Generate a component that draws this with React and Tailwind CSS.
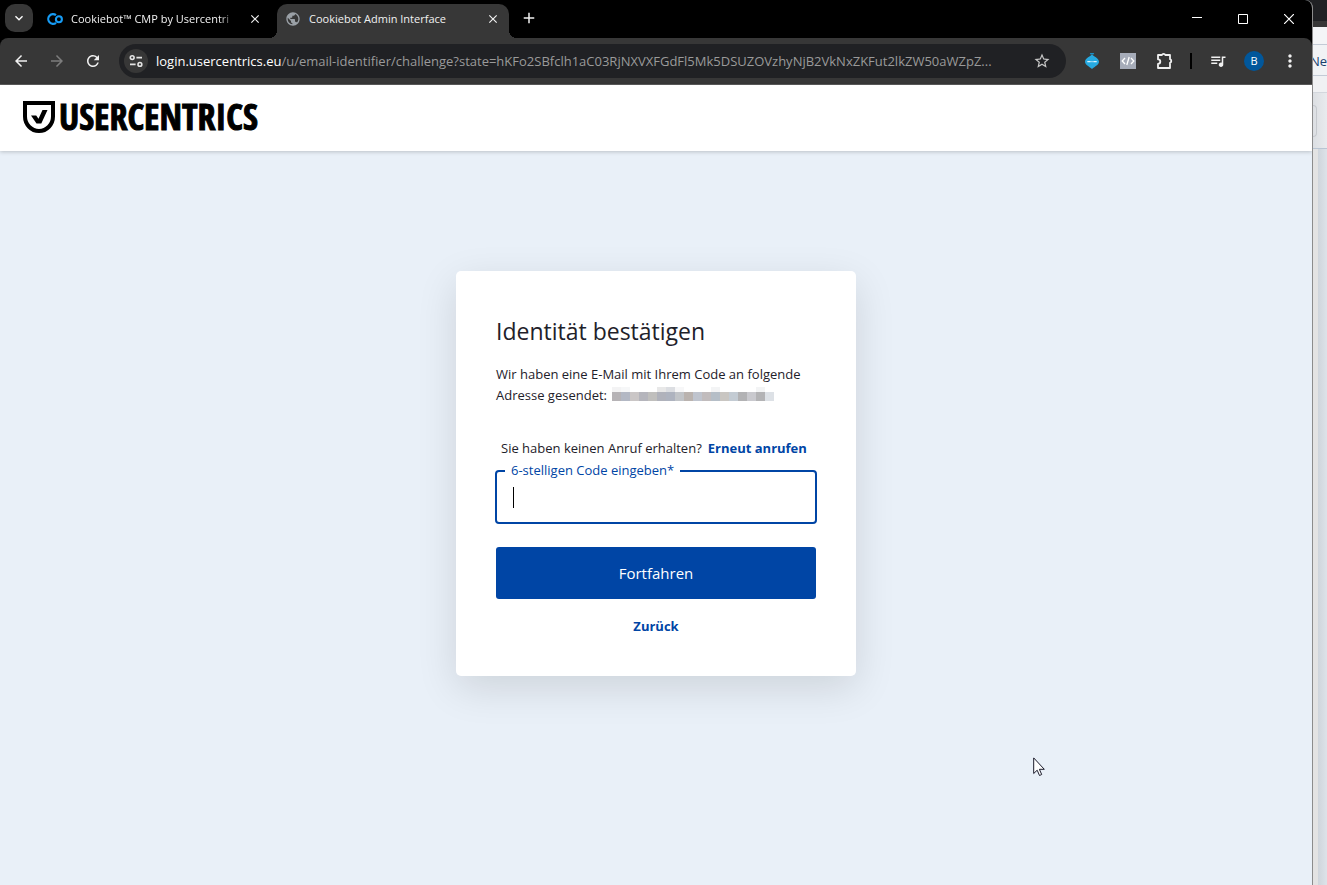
import {
  MdAdd,
  MdArrowBack,
  MdArrowForward,
  MdClose,
  MdKeyboardArrowDown,
  MdMoreVert,
  MdPublic,
  MdQueueMusic,
  MdRefresh,
  MdStarOutline,
} from "react-icons/md";

const CookiebotIcon = () => (
  <svg viewBox="0 0 16 16" className="w-4 h-4 shrink-0" fill="none" stroke="#169bf4">
    <path d="M9 4.2A4.8 4.8 0 1 0 9 11.8" strokeWidth="2.2" />
    <circle cx="11.9" cy="8.3" r="3" strokeWidth="2.1" />
  </svg>
);

const SiteInfoIcon = () => (
  <svg viewBox="0 0 14 14" className="w-3.5 h-3.5" fill="none" stroke="#e3e3e3" strokeWidth="1.6">
    <circle cx="3.2" cy="3.6" r="1.9" />
    <path d="M7.4 3.6H13M1 10.4h5.6" />
    <circle cx="10.9" cy="10.4" r="1.9" />
  </svg>
);

const TimerIcon = () => (
  <svg viewBox="0 0 16 16" className="w-4 h-4">
    <path d="M5.8 0h4.4l-.7 1.6H6.5z" fill="#1c8fc4" />
    <path d="M8 1.5c1 1.4 7 3.5 7 7.2 0 3-4 4.6-7 7.3-3-2.700-7-4.300-7-7.300 0-3.700 6-5.800 7-7.200z" fill="#26a9e0" />
    <path d="M3.3 8.7h9.4" stroke="#d9f2fd" strokeWidth="1.2" strokeDasharray="3.4 .7 1.2 .7" />
  </svg>
);

const CodeIcon = () => (
  <svg viewBox="0 0 16 16" className="w-4 h-4">
    <path d="M0 0h16v16H0z" fill="#a6acb9" />
    <path d="M5 5 2.2 8 5 11M11 5l2.8 3L11 11M9.2 4 6.8 12" fill="none" stroke="#fff" strokeWidth="1.3" />
  </svg>
);

const PuzzleIcon = () => (
  <svg viewBox="0 0 18 18" className="w-[18px] h-[18px]" fill="none" stroke="#f1f1f1" strokeWidth="1.8" strokeLinejoin="round">
    <path d="M3 3h3.900a1.800 1.800 0 0 1 3.400 0H15v4.200a1.900 1.900 0 0 1 0 3.600V16H3v-4.100a2.300 2.300 0 0 0 0-4.600z" />
  </svg>
);

const IconButton = ({ label, className = "", children }) => (
  <button aria-label={label} className={`w-7 h-7 shrink-0 flex items-center justify-center rounded-full ${className}`}>
    {children}
  </button>
);

const Tab = ({ icon, title, active }) => (
  <div
    className={`w-[232px] h-[34px] px-2 pb-1 flex items-center gap-2 rounded-t-[10px] ${
      active ? "bg-[#373737]" : "bg-black"
    }`}
  >
    {icon}
    <span
      className={`flex-1 overflow-hidden whitespace-nowrap text-[11px] leading-4 text-[#f1f1f1] ${
        active ? "" : "[mask-image:linear-gradient(to_right,black_88%,transparent_98%)]"
      }`}
    >
      {title}
    </span>
    <button aria-label="Tab schließen" className="w-4 h-4 flex items-center justify-center text-[#f1f1f1]">
      <MdClose className="w-3.5 h-3.5" stroke="currentColor" />
    </button>
  </div>
);

const TabStrip = () => (
  <div className="h-[38px] bg-black flex items-end">
    <button
      aria-label="Tabs durchsuchen"
      className="w-7 h-7 ml-[5px] mr-1.5 mb-1.5 flex items-center justify-center rounded-[10px] bg-[#373737] text-white"
    >
      <MdKeyboardArrowDown className="w-4 h-4" />
    </button>
    <Tab icon={<CookiebotIcon />} title="Cookiebot™ CMP by Usercentri" />
    <span className="w-2 h-2 -ml-0.5 bg-[radial-gradient(circle_at_0_0,transparent_8px,#373737_8px)]" />
    <Tab icon={<MdPublic className="w-4 h-4 shrink-0 text-[#9aa0a6]" />} title="Cookiebot Admin Interface" active />
    <span className="w-2 h-2 bg-[radial-gradient(circle_at_100%_0,transparent_8px,#373737_8px)]" />
    <button aria-label="Neuer Tab" className="w-6 h-6 mb-2 flex items-center justify-center text-[#f1f1f1]">
      <MdAdd className="w-[18px] h-[18px]" />
    </button>
    <div className="ml-auto self-stretch flex text-white">
      <button aria-label="Minimieren" className="w-[46px] flex items-center justify-center">
        <svg viewBox="0 0 10 10" className="w-2.5 h-2.5" stroke="currentColor">
          <path d="M0 3.5h10" />
        </svg>
      </button>
      <button aria-label="Maximieren" className="w-[46px] flex items-center justify-center">
        <svg viewBox="0 0 10 10" className="w-2.5 h-2.5" fill="none" stroke="currentColor">
          <path d="M.5.5h9v9h-9z" />
        </svg>
      </button>
      <button aria-label="Schließen" className="w-[46px] flex items-center justify-center">
        <svg viewBox="0 0 10 10" className="w-2.5 h-2.5" stroke="currentColor" strokeWidth="1.2">
          <path d="M0 0l10 10M10 0 0 10" />
        </svg>
      </button>
    </div>
  </div>
);

const Toolbar = () => (
  <div className="bg-black">
    <div className="h-[47px] pl-[7px] pr-2 flex items-center gap-2 rounded-t-[8px] bg-[#373737] border-b border-[#5c5c5c] text-[#f1f1f1]">
      <IconButton label="Zurück">
        <MdArrowBack className="w-[18px] h-[18px]" />
      </IconButton>
      <IconButton label="Vorwärts" className="text-[#7d7d7d]">
        <MdArrowForward className="w-[18px] h-[18px]" />
      </IconButton>
      <IconButton label="Neu laden">
        <MdRefresh className="w-[18px] h-[18px]" />
      </IconButton>
      <div className="flex-1 min-w-0 h-[34px] mx-1 pl-[5px] pr-2.5 flex items-center rounded-full bg-[#202124]">
        <button aria-label="Websiteinformationen" className="w-6 h-6 mr-2 shrink-0 flex items-center justify-center rounded-full bg-[#373737]">
          <SiteInfoIcon />
        </button>
        <p className="flex-1 min-w-0 overflow-hidden whitespace-nowrap text-[13px] leading-5 text-[#9a9a9a]">
          <span className="text-white">login.usercentrics.eu</span>
          /u/email-identifier/challenge?state=hKFo2SBfclh1aC03RjNXVXFGdFl5Mk5DSUZOVzhyNjB2VkNxZKFut2lkZW50aWZpZ...
        </p>
        <IconButton label="Lesezeichen setzen" className="text-[#c7c7c7]">
          <MdStarOutline className="w-[18px] h-[18px]" />
        </IconButton>
      </div>
      <IconButton label="Timer">
        <TimerIcon />
      </IconButton>
      <IconButton label="Code">
        <CodeIcon />
      </IconButton>
      <IconButton label="Erweiterungen">
        <PuzzleIcon />
      </IconButton>
      <span className="w-0.5 h-4 mx-1 bg-black" />
      <IconButton label="Medien">
        <MdQueueMusic className="w-[18px] h-[18px]" />
      </IconButton>
      <IconButton label="Profil">
        <span className="w-5 h-5 flex items-center justify-center rounded-full bg-[#01579b] text-[11px] leading-5 text-white">B</span>
      </IconButton>
      <IconButton label="Menü">
        <MdMoreVert className="w-5 h-5" />
      </IconButton>
    </div>
  </div>
);

const Logo = () => (
  <a href="#" aria-label="Usercentrics" className="flex items-center gap-1 text-black">
    <svg viewBox="0 0 32 32" className="w-8 h-8">
      <path d="M2 2h28v13.5a14 14.5 0 0 1-28 0z" fill="none" stroke="currentColor" strokeWidth="4" />
      <path d="M8 14.5h5.200l2.300 3.300L19.500 9h5l-6.200 13.500h-4.800z" fill="currentColor" />
    </svg>
    <span className="font-['Open_Sans_Condensed','Roboto_Condensed',sans-serif] font-bold text-[36px] leading-8 [-webkit-text-stroke:1px_black]">
      USERCENTRICS
    </span>
  </a>
);

// pixelated e-mail address, one entry per 9px block
const maskTop = [
  "bg-[#f3f3f4]", "bg-[#f6f7f8]", "bg-white", "bg-white", "bg-white", "bg-[#e8e8e8]",
  "bg-[#dcdee2]", "bg-[#f7f7f8]", "bg-white", "bg-white", "bg-white", "bg-[#f3f4f5]",
  "bg-white", "bg-white", "bg-white", "bg-white", "bg-[#f3f4f5]", "bg-white",
];
const maskBottom = [
  "bg-[#b6b3b6]", "bg-[#b3b8c4]", "bg-[#cac6c6]", "bg-[#b5b5bc]", "bg-[#c0bfbd]", "bg-[#b0b2bb]",
  "bg-[#aeb3bf]", "bg-[#c1c4c8]", "bg-[#bab3af]", "bg-[#bfc4ce]", "bg-[#c1bcbd]", "bg-[#b5bec7]",
  "bg-[#c9c6c2]", "bg-[#c3cbd3]", "bg-[#b2b2b4]", "bg-[#c9c9ce]", "bg-[#b3b3b5]", "bg-[#dde1e6]",
];

const MaskedMail = () => (
  <span className="inline-flex flex-col ml-0.5 align-[8px]">
    <span className="flex">
      {maskTop.map((color, i) => (
        <span key={i} className={`w-[9px] h-[5px] ${color}`} />
      ))}
    </span>
    <span className="flex">
      {maskBottom.map((color, i) => (
        <span key={i} className={`w-[9px] h-[9px] ${color}`} />
      ))}
    </span>
  </span>
);

const ChallengeCard = () => (
  <form className="w-[400px] p-10 bg-white rounded-[5px] text-[#1e212a] text-[13px] shadow-[0_12px_40px_rgba(0,0,0,0.12)]">
    <h1 className="text-[23px] leading-10">Identität bestätigen</h1>
    <p className="mt-[13px] leading-[21px]">
      Wir haben eine E-Mail mit Ihrem Code an folgende Adresse gesendet: <MaskedMail />
    </p>
    <p className="mt-8 px-[5px] leading-5">
      Sie haben keinen Anruf erhalten?
      <button type="button" className="ml-1.5 font-bold text-[#0045a5]">Erneut anrufen</button>
    </p>
    <div className="relative h-[54px] mt-3 -mx-px px-4 flex items-center border-2 border-[#0045a5] rounded-[4px]">
      <label htmlFor="code" className="absolute left-2 -top-3 px-1.5 bg-white leading-5 text-[#0045a5]">
        6-stelligen Code eingeben*
      </label>
      <span className="w-px h-[21px] bg-black" />
      <input id="code" type="text" inputMode="numeric" className="flex-1 min-w-0 h-full text-base outline-none" />
    </div>
    <button type="button" className="w-full h-[52px] mt-[23px] rounded-[3px] bg-[#0045a5] text-[15px] text-white">
      Fortfahren
    </button>
    <div className="mt-[17px] text-center leading-5">
      <button type="button" className="font-bold text-[#0045a5]">Zurück</button>
    </div>
  </form>
);

// slice of the window that sits behind the browser
const BackWindow = () => (
  <div className="w-3.5 shrink-0 flex flex-col overflow-hidden bg-[#e2e6ea]">
    <div className="h-[21px] shrink-0 bg-[#202124]" />
    <div className="h-1.5 shrink-0 bg-[#373737]" />
    <div className="h-[17px] shrink-0 bg-[#f4f5f7]" />
    <div className="h-8 shrink-0 border-y border-[#c3cbd6] bg-[#f1f3f5] font-medium text-[13px] leading-8 -indent-[3px] text-[#17406d]">
      Ne
    </div>
    <div className="h-[17px] shrink-0 border-b border-[#d3d7dd] bg-[#f0f1f3]" />
    <div className="h-14 shrink-0 flex items-center border-b border-[#b9c5d3] bg-linear-to-r from-[#dcdfe3] to-[#e9ebee]">
      <div className="w-1 h-8 border border-l-0 border-[#c6c9ce] rounded-r-[4px]" />
    </div>
    <div className="flex-1 flex">
      <div className="w-[5px] bg-[#e3e3e3]" />
      <div className="flex-1 bg-linear-to-r from-[#cfd5dc] to-[#dde3e9]" />
    </div>
  </div>
);

export default function App() {
  return (
    <div className="min-h-screen flex bg-[#202124] font-['Open_Sans','Noto_Sans',sans-serif]">
      <div className="flex-1 min-w-0 flex flex-col overflow-hidden border-r border-[#8c8c8c] rounded-tr-[8px] bg-[#e9f0f8]">
        <TabStrip />
        <Toolbar />
        <header className="h-[66px] pl-[23px] pb-0.5 flex items-center bg-white shadow-[0_1px_4px_rgba(0,0,0,0.2)]">
          <Logo />
        </header>
        <main className="flex-1 pt-[120px] pb-10 flex justify-center items-start">
          <ChallengeCard />
        </main>
      </div>
      <BackWindow />
      <svg viewBox="0 0 12 20" className="absolute left-[1033px] top-[757px] w-3 h-5">
        <path
          d="M.7.9v15.6l3.500-3.300 2.300 5.300 2.200-1-2.300-5.200h4.900z"
          fill="#fff"
          stroke="#1b1b2b"
          strokeWidth="1"
          strokeLinejoin="round"
        />
      </svg>
    </div>
  );
}
